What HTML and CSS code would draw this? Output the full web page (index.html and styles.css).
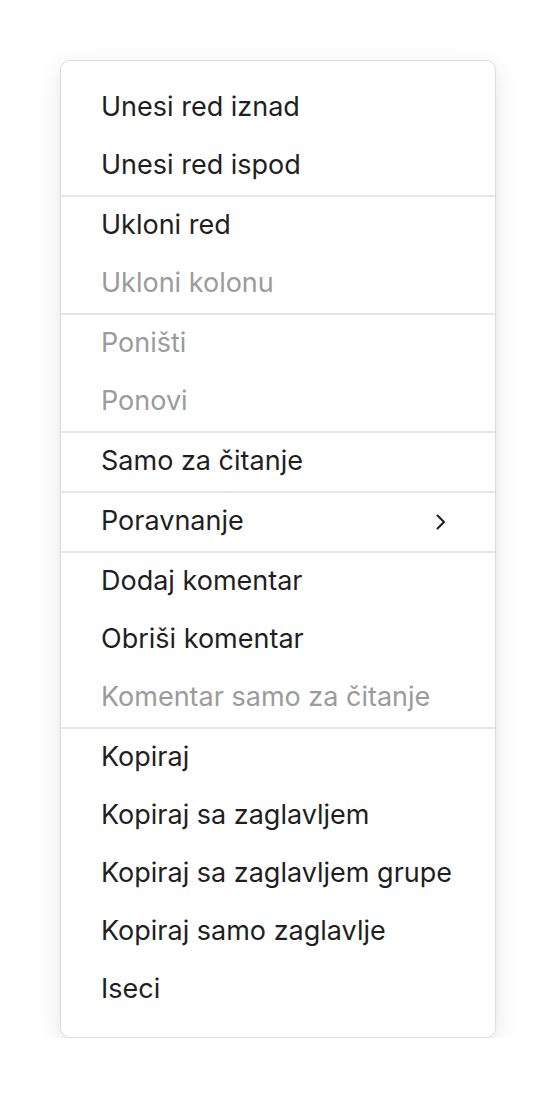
FILE: index.html
```html
<!DOCTYPE html>
<html lang="sr">
<head>
<meta charset="utf-8">
<title>Meni</title>
<link rel="stylesheet" href="styles.css">
</head>
<body>
<div class="menu">
  <div class="group">
    <div class="item">Unesi red iznad</div>
    <div class="item">Unesi red ispod</div>
  </div>
  <div class="sep"></div>
  <div class="group">
    <div class="item">Ukloni red</div>
    <div class="item disabled">Ukloni kolonu</div>
  </div>
  <div class="sep"></div>
  <div class="group">
    <div class="item disabled">Poništi</div>
    <div class="item disabled">Ponovi</div>
  </div>
  <div class="sep"></div>
  <div class="group">
    <div class="item">Samo za čitanje</div>
  </div>
  <div class="sep"></div>
  <div class="group">
    <div class="item has-sub">
      <span>Poravnanje</span>
      <svg class="chev" width="12" height="18" viewBox="0 0 12 18" aria-hidden="true"><path d="M2.5 2.5 L9 9 L2.5 15.5" fill="none" stroke="#1f1f1f" stroke-width="2" stroke-linecap="round" stroke-linejoin="round"/></svg>
    </div>
  </div>
  <div class="sep"></div>
  <div class="group">
    <div class="item">Dodaj komentar</div>
    <div class="item">Obriši komentar</div>
    <div class="item disabled">Komentar samo za čitanje</div>
  </div>
  <div class="sep"></div>
  <div class="group">
    <div class="item">Kopiraj</div>
    <div class="item">Kopiraj sa zaglavljem</div>
    <div class="item">Kopiraj sa zaglavljem grupe</div>
    <div class="item">Kopiraj samo zaglavlje</div>
    <div class="item">Iseci</div>
  </div>
</div>
</body>
</html>
```
FILE: styles.css
```css
html, body {
  margin: 0;
  padding: 0;
  background: #ffffff;
}
body {
  font-family: Inter, "Noto Sans", "Liberation Sans", sans-serif;
  -webkit-font-smoothing: antialiased;
}
.menu {
  box-sizing: border-box;
  width: 436px;
  margin: 60px 0 0 60px;
  padding: 18px 0 18px;
  background: #ffffff;
  border: 1px solid #dddddd;
  border-radius: 10px;
  box-shadow: 0 8px 28px rgba(0, 0, 0, 0.09), 0 2px 6px rgba(0, 0, 0, 0.04);
}
.item {
  box-sizing: border-box;
  height: 58px;
  display: flex;
  align-items: center;
  justify-content: space-between;
  padding: 0 50px 4px 40px;
  font-size: 27px;
  color: #1f1f1f;
  white-space: nowrap;
}
.item.disabled {
  color: #9b9b9b;
}
.sep {
  height: 2px;
  background: #e6e6e6;
}
.chev {
  display: block;
  margin: 4px -2px 0 0;
}
```
